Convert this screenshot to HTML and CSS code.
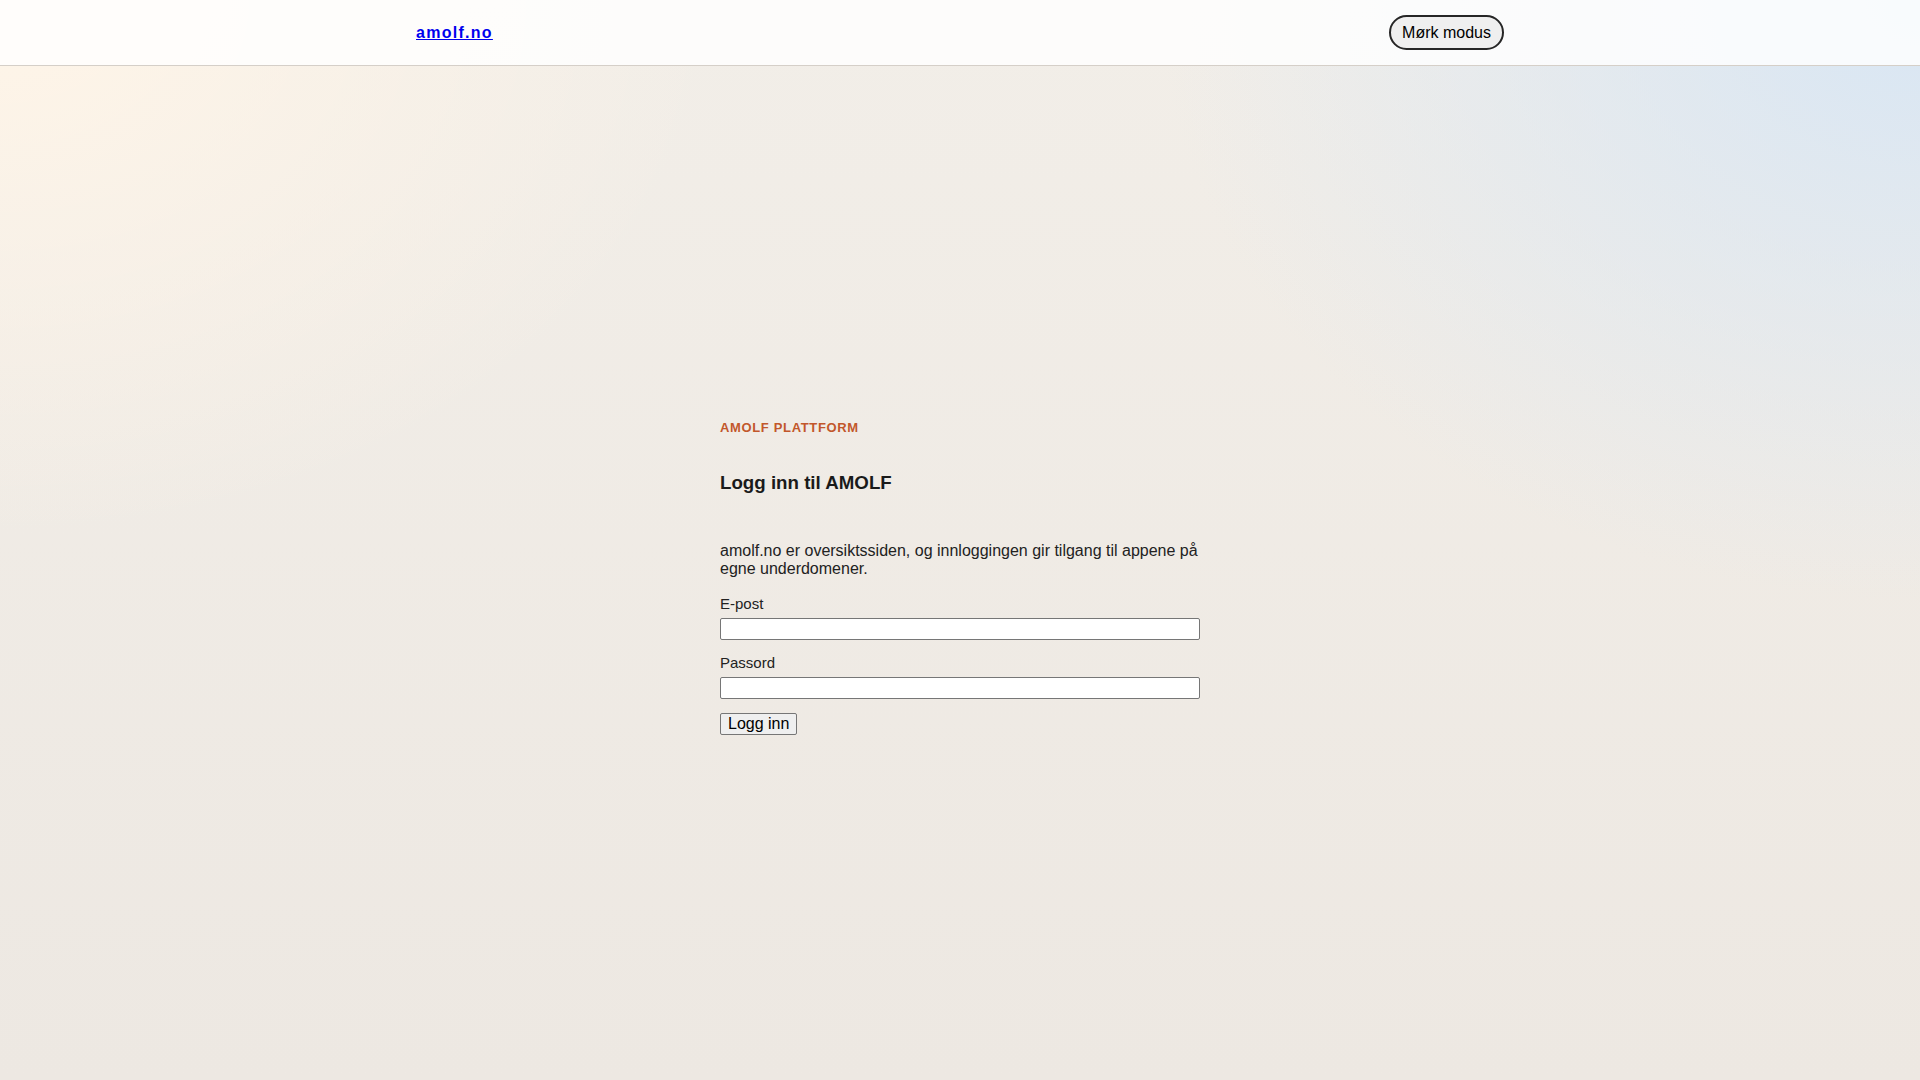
FILE: index.html
```html
<!DOCTYPE html>
<html lang="no">
<head>
<meta charset="utf-8">
<title>Logg inn til AMOLF</title>
<link rel="stylesheet" href="styles.css">
</head>
<body>
<header class="topbar">
  <div class="topbar-inner">
    <a class="brand" href="#">amolf.no</a>
    <button class="theme-toggle" type="button">Mørk modus</button>
  </div>
</header>
<main class="main">
  <section class="login">
    <p class="eyebrow">AMOLF plattform</p>
    <h1 class="title">Logg inn til AMOLF</h1>
    <p class="intro">amolf.no er oversiktssiden, og innloggingen gir tilgang til appene på egne underdomener.</p>
    <form class="form">
      <div class="field">
        <label class="label" for="email">E-post</label>
        <input class="input" id="email" type="email">
      </div>
      <div class="field">
        <label class="label" for="password">Passord</label>
        <input class="input" id="password" type="password">
      </div>
      <div class="actions">
        <button class="submit" type="submit">Logg inn</button>
      </div>
    </form>
  </section>
</main>
</body>
</html>
```

FILE: styles.css
```css
html {
  min-height: 100%;
  background-color: #eee9e3;
  background-image:
    radial-gradient(ellipse 720px 540px at 0% 0%, rgba(255, 245, 232, 1), rgba(255, 245, 232, 0) 100%),
    radial-gradient(ellipse 760px 600px at 100% 0%, rgba(216, 230, 244, 1), rgba(216, 230, 244, 0) 100%),
    linear-gradient(180deg, #f2eee8 0%, #ede8e2 100%);
  background-repeat: no-repeat;
  background-attachment: fixed;
}

body {
  margin: 0;
  font-family: "Liberation Sans", Arial, sans-serif;
  font-size: 16px;
  color: #1f1f1f;
}

.topbar {
  background: rgba(255, 255, 255, 0.82);
  border-bottom: 1px solid #d5cfc8;
}

.topbar-inner {
  max-width: 1088px;
  margin: 0 auto;
  height: 65px;
  display: flex;
  align-items: center;
  justify-content: space-between;
}

.brand {
  color: #0000ee;
  font-weight: bold;
  letter-spacing: 0.08em;
  text-decoration: underline;
}

.theme-toggle {
  font: inherit;
  color: #000;
  background: #efefef;
  border: 2px solid #262626;
  border-radius: 999px;
  padding: 6.5px 11px;
}

.main {
  min-height: calc(100vh - 66px);
  box-sizing: border-box;
  padding-top: 8px;
  display: flex;
  align-items: center;
  justify-content: center;
}

.login {
  width: 480px;
}

.eyebrow {
  margin: 0;
  font-size: 13px;
  font-weight: bold;
  letter-spacing: 0.05em;
  text-transform: uppercase;
  color: #c2572b;
}

.title {
  margin: 37px 0 0;
  font-size: 18.72px;
  font-weight: bold;
  color: #1a1a1a;
}

.intro {
  margin: 48px 0 0;
  color: #222;
}

.form {
  margin-top: 17px;
  display: grid;
  gap: 14px;
}

.field {
  display: grid;
  gap: 6px;
}

.label {
  font-size: 15px;
  color: #222;
}

.input {
  display: block;
  width: 100%;
  height: 22px;
  box-sizing: border-box;
  background: #fff;
  border: 1px solid #767676;
  border-radius: 2px;
  padding: 1px 2px;
  font-family: "Liberation Sans", Arial, sans-serif;
  font-size: 13.33px;
}

.actions {
  display: flex;
}

.submit {
  font: inherit;
  color: #000;
  background: #efefef;
  border: 1px solid #767676;
  border-radius: 2px;
  padding: 1px 7px;
}
```
